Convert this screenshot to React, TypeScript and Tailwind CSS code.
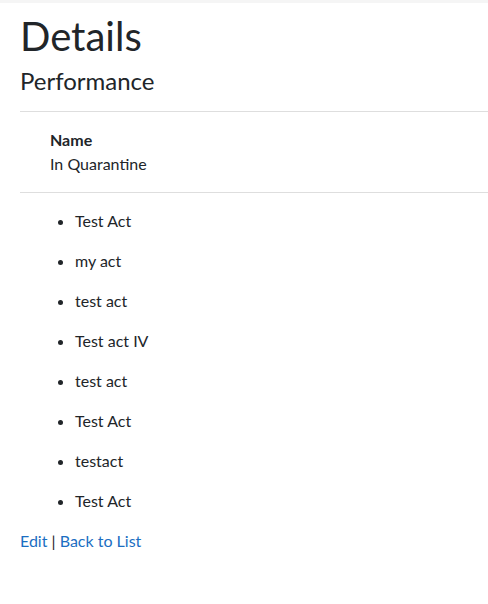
import React from "react";

const acts = [
  "Test Act",
  "my act",
  "test act",
  "Test act IV",
  "test act",
  "Test Act",
  "testact",
  "Test Act",
];

export default function App() {
  return (
    <div
      className="min-h-[604px] bg-white border-t-[3px] border-[#f5f5f5] pl-5 text-[#212529]"
      style={{ fontFamily: "Lato, 'Open Sans', sans-serif" }}
    >
      <h1 className="pt-[9px] text-[40px] leading-[48px] font-normal">Details</h1>

      <div>
        <h4 className="mt-[6px] text-[24px] leading-[29px] font-normal">Performance</h4>
        <hr className="mt-[16px] border-t border-[#dedede]" />

        {/* detail list */}
        <dl className="pl-[30px] pt-[16px] text-[16px] leading-[24px]">
          <dt className="font-bold">Name</dt>
          <dd>In Quarantine</dd>
        </dl>
        <hr className="mt-[16px] border-t border-[#dedede]" />

        <ul className="list-disc pl-[55px] pt-[16px] text-[16px] leading-[24px]">
          {acts.map((act, i) => (
            <li key={i} className="mb-[16px]">
              {act}
            </li>
          ))}
        </ul>
      </div>

      <div className="text-[16px] leading-[24px]">
        <a href="#" className="text-[#1b6ec2]">
          Edit
        </a>{" "}
        |{" "}
        <a href="#" className="text-[#1b6ec2]">
          Back to List
        </a>
      </div>
    </div>
  );
}
